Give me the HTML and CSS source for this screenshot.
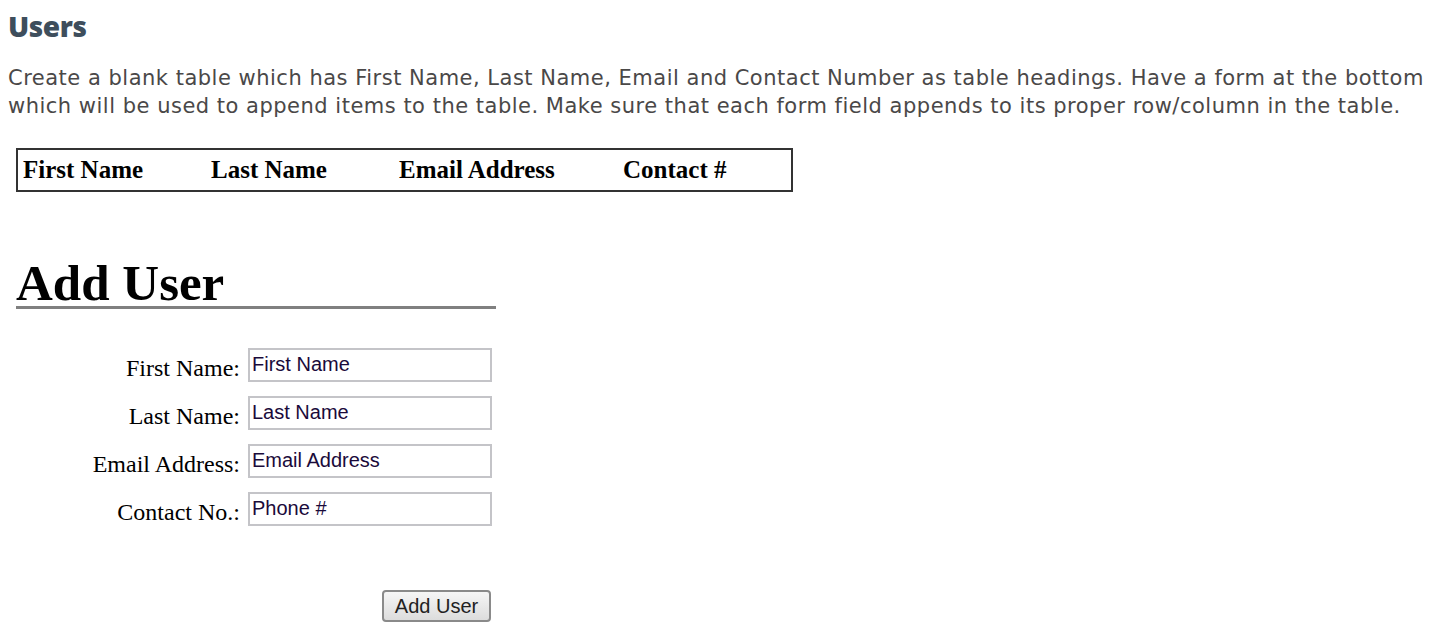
FILE: index.html
```html
<!DOCTYPE html>
<html>
<head>
<meta charset="utf-8">
<title>Users</title>
<link rel="stylesheet" href="styles.css">
</head>
<body>
<h2 class="title">Users</h2>
<p class="intro">Create a blank table which has First Name, Last Name, Email and Contact Number as table headings. Have a form at the bottom which will be used to append items to the table. Make sure that each form field appends to its proper row/column in the table.</p>
<div class="exercise">
  <table class="users">
    <thead>
      <tr>
        <th class="c1">First Name</th>
        <th class="c2">Last Name</th>
        <th class="c3">Email Address</th>
        <th class="c4">Contact #</th>
      </tr>
    </thead>
    <tbody></tbody>
  </table>
  <h1 class="add-title">Add User</h1>
  <form class="add-form">
    <label class="lbl" for="fn">First Name:</label>
    <input class="field" id="fn" type="text" value="First Name">
    <label class="lbl" for="ln">Last Name:</label>
    <input class="field" id="ln" type="text" value="Last Name">
    <label class="lbl" for="em">Email Address:</label>
    <input class="field" id="em" type="text" value="Email Address">
    <label class="lbl" for="ph">Contact No.:</label>
    <input class="field" id="ph" type="text" value="Phone #">
    <div class="actions"><button type="button" class="btn">Add User</button></div>
  </form>
</div>
</body>
</html>
```
FILE: styles.css
```css
html, body { background: #fff; }
body {
  margin: 8px;
  font-family: "Liberation Serif", "Times New Roman", serif;
}
.title {
  margin: 0;
  padding-top: 0;
  font-family: "Open Sans", "Noto Sans", sans-serif;
  font-weight: 800;
  font-size: 28px;
  line-height: 36px;
  color: #3e4e5c;
  letter-spacing: -0.4px;
}
.intro {
  margin: 20px 0 0 0;
  font-family: "DejaVu Sans", "Open Sans", sans-serif;
  font-size: 21px;
  line-height: 28px;
  color: #4a4848;
  width: 1428px;
  letter-spacing: 0.5px;
}
.exercise {
  margin: 28px 0 0 8px;
}
.users {
  border: 2px solid #333;
  border-collapse: separate;
  border-spacing: 0;
  width: 777px;
}
.users th {
  height: 40px;
  text-align: left;
  vertical-align: middle;
  font-weight: bold;
  font-size: 25px;
  padding: 0 0 0 5px;
  color: #000;
  letter-spacing: 0;
}
.users .c1 { width: 183px; }
.users .c2 { width: 183px; }
.users .c3 { width: 219px; }
.add-title {
  margin: 68px 0 0 0;
  width: 480px;
  font-size: 51px;
  line-height: 46px;
  font-weight: bold;
  color: #000;
  border-bottom: 3px solid #808080;
  padding-bottom: 0;
}
.add-form {
  margin-top: 39px;
  display: grid;
  grid-template-columns: 224px 244px;
  column-gap: 8px;
  row-gap: 14px;
  align-items: center;
}
.lbl {
  text-align: right;
  font-size: 24px;
  color: #000;
  letter-spacing: 0;
  padding-top: 6px;
}
.field {
  box-sizing: border-box;
  width: 244px;
  height: 34px;
  margin: 0;
  border: 2px solid #c4c4c8;
  padding: 0 2px 2px;
  font-family: "Liberation Sans", Arial, sans-serif;
  font-size: 20px;
  color: #1a0a3a;
  background: #fff;
}
.actions {
  grid-column: 1 / 3;
  display: flex;
  justify-content: flex-end;
  margin-top: 50px;
}
.btn {
  box-sizing: border-box;
  width: 109px;
  height: 32px;
  margin-right: 1px;
  padding: 0;
  font-family: "Liberation Sans", Arial, sans-serif;
  font-size: 20px;
  color: #222;
  border: 2px solid #8a8a8a;
  border-radius: 4px;
  background: linear-gradient(#f6f6f6, #dcdcdc);
}
```
